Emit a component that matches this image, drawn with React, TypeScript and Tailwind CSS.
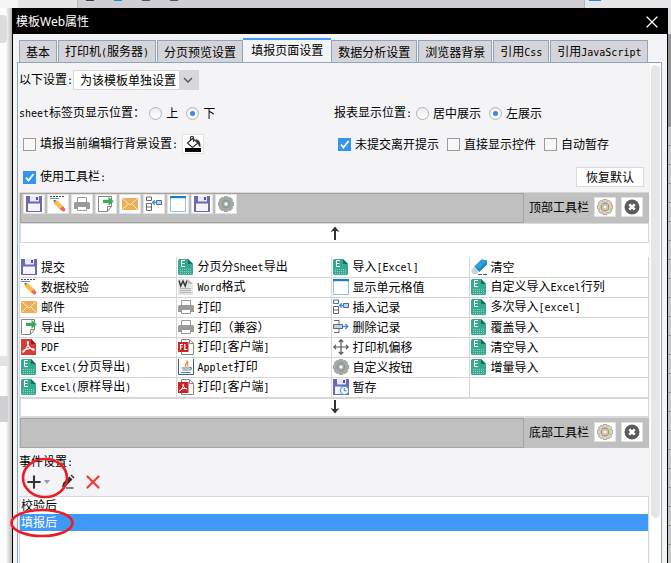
import { useState } from "react";
import type { ReactNode } from "react";
import { Plus, X } from "lucide-react";

const TABS = [
  "基本",
  "打印机(服务器)",
  "分页预览设置",
  "填报页面设置",
  "数据分析设置",
  "浏览器背景",
  "引用Css",
  "引用JavaScript",
];

const TOOLBAR = ["save", "pencil", "print", "export", "mail", "insert", "window", "save", "gear"];

const TOOLBAR_LABELS = ["提交", "数据校验", "打印", "导出", "邮件", "插入记录", "显示单元格值", "暂存", "自定义按钮"];

const ROWS = [
  [["save", "提交"], ["excel", "分页分Sheet导出"], ["excel", "导入[Excel]"], ["eraser", "清空"]],
  [["pencil", "数据校验"], ["word", "Word格式"], ["window", "显示单元格值"], ["excel", "自定义导入Excel行列"]],
  [["mail", "邮件"], ["print", "打印"], ["insert", "插入记录"], ["excel", "多次导入[excel]"]],
  [["export", "导出"], ["print", "打印（兼容）"], ["remove", "删除记录"], ["excel", "覆盖导入"]],
  [["pdf", "PDF"], ["flash", "打印[客户端]"], ["move", "打印机偏移"], ["excel", "清空导入"]],
  [["excel", "Excel(分页导出)"], ["java", "Applet打印"], ["gear", "自定义按钮"], ["excel", "增量导入"]],
  [["excel", "Excel(原样导出)"], ["pdfpage", "打印[客户端]"], ["saveclock", "暂存"], null],
];

// Latin runs are half the width of a Chinese character, as in SimSun
function Label({ text }: { text: string }) {
  return (
    <span>
      {text.split(/([\x21-\x7e]+)/).map((part, i) =>
        i % 2 ? (
          <span key={i} className="font-['DejaVu_Sans_Mono',monospace] text-[10px]">
            {part}
          </span>
        ) : (
          part
        )
      )}
    </span>
  );
}

function Gear({ color, edge, hole }: { color: string; edge: string; hole: string }) {
  return (
    <>
      <g fill={color} stroke={edge} strokeWidth="0.8">
        {[0, 45, 90, 135].map((a) => (
          <rect key={a} x="5.8" y="0.4" width="4.4" height="15.2" rx="1" transform={`rotate(${a} 8 8)`} />
        ))}
      </g>
      <circle cx="8" cy="8" r="6" fill={color} />
      <circle cx="8" cy="8" r="3.8" fill="none" stroke={edge} strokeWidth="1.2" />
      <circle cx="8" cy="8" r="2" fill={hole} stroke={edge} strokeWidth="0.6" />
    </>
  );
}

function Page() {
  return (
    <path d="M3.5 .5h8l4 4v11h-12z M11.5 .5v4h4" fill="#fff" stroke="#858585" />
  );
}

const ART: Record<string, ReactNode> = {
  save: (
    <>
      <path d="M0 0h16v16H0z" fill="#6a67b3" />
      <path d="M4 0h9v5.5H4z" fill="#e9e9f5" />
      <path d="M10 1h2v3h-2z" fill="#5350a0" />
      <path d="M2 7.5h12V15H2z" fill="#f4f4fa" />
    </>
  ),
  saveclock: (
    <>
      <path d="M0 0h16v16H0z" fill="#6a67b3" />
      <path d="M4 0h9v5.5H4z" fill="#e9e9f5" />
      <path d="M10 1h2v3h-2z" fill="#5350a0" />
      <path d="M2 7.5h12V15H2z" fill="#f4f4fa" />
      <circle cx="11.5" cy="11.5" r="4.1" fill="#fff" stroke="#459be8" strokeWidth="1.2" />
      <path d="M11.2 9v2.8h2.3" fill="none" stroke="#3478b9" />
    </>
  ),
  pencil: (
    <>
      <path d="M0 .5h15" stroke="#444" strokeDasharray="2 1" />
      <path d="M0 2.5h9" stroke="#4b9bea" />
      <path d="M3.5 4l3.8.4 6.700 6.600-3.200 3.200L4.200 8z" fill="#f7be4d" />
      <path d="M3.5 4l2.800.3L4 6.800z" fill="#8d6a45" />
      <path d="M12.800 10.200l2.300 2.500c.8 2-.8 3.200-2.600 2.500l-2.400-2.300z" fill="#eb6658" />
    </>
  ),
  print: (
    <>
      <path d="M3.5 1.5h9v5h-9z" fill="#fff" stroke="#999" />
      <path d="M1.5 6h13q1.5 0 1.5 1.5V13H0V7.5Q0 6 1.5 6z" fill="#9b9b9b" />
      <path d="M3.5 10.5h9v4h-9z" fill="#fff" stroke="#999" />
    </>
  ),
  export: (
    <>
      <path d="M.5 .5h13v10l-4 5H.5z" fill="#fff" stroke="#858585" />
      <path d="M9.5 15v-4.5h4" fill="none" stroke="#858585" />
      <path d="M5 3.8h5.5V1l5.3 4.3-5.3 4.4V6.9H5z" fill="#3cad57" />
    </>
  ),
  mail: (
    <>
      <path d="M0 2h16v12H0z" fill="#edae55" />
      <path d="M.5 2.5L8 9l7.5-6.5M.5 13.5L6 8M15.5 13.5L10 8" fill="none" stroke="#fff3df" strokeWidth=".9" />
    </>
  ),
  insert: (
    <>
      <path d="M.5 1h5v3.5h-5zM.5 7.5h5v7h-5zM.5 11h5" fill="#fff" stroke="#666" />
      <path d="M10.5 4.5h5v4h-5z" fill="#b2d6f5" stroke="#666" />
      <path d="M6.5 6.5H11M8.8 4.3L6.5 6.5l2.3 2.2" fill="none" stroke="#398fe8" strokeWidth="1.3" />
    </>
  ),
  remove: (
    <>
      <path d="M1 1.5h5v4M1 13.5h5v-4" fill="none" stroke="#666" />
      <path d="M.5 5.5h9v4h-9z" fill="#b2d6f5" stroke="#666" />
      <path d="M9.5 7.5h5M12.3 5l2.6 2.5-2.6 2.5" fill="none" stroke="#398fe8" strokeWidth="1.3" />
    </>
  ),
  window: (
    <>
      <path d="M.5 .5h15v15H.5z" fill="#fff" stroke="#94bfe2" />
      <path d="M0 0h16v2.2H0z" fill="#1781c8" />
    </>
  ),
  gear: <Gear color="#a5adaa" edge="#8b9490" hole="#fff" />,
  excel: (
    <>
      <path d="M1.5 0H10l5 5v9.5q0 1.5-1.5 1.5h-12Q0 16 0 14.500v-13Q0 0 1.500 0z" fill="#36aa91" />
      <path d="M10 0l5 5h-5z" fill="#17705e" />
      <path d="M7 1.500H3.500v6H7M3.500 4.500h3" fill="none" stroke="#fff" />
      <path d="M2 10.500h11M2 12.500h11M2 14.500h11" stroke="#a5dbcf" strokeWidth=".8" strokeDasharray="1 1" />
    </>
  ),
  word: (
    <>
      <path d="M0 0h10l5 5v11H0z" fill="#e4e4e4" />
      <path d="M10 0l5 5h-5z" fill="#bdbdbd" />
      <path d="M1 1.500l1.700 5.500L5 2l2.200 5L9 1.500" fill="none" stroke="#333" strokeWidth="1.400" />
      <path d="M2 9.500h11M2 11.500h11M2 13.500h11" stroke="#b5b5b5" />
    </>
  ),
  pdf: (
    <>
      <path d="M0 0h10l5 5v11H0z" fill="#d93b37" />
      <path d="M10 0l5 5h-5z" fill="#921f1d" />
      <path d="M6.500 2.500c2 0 .5 6-4 10.500-1.500.5-1-1 1-2 3-1.500 7-2 9.500-.8 1 .9-.5 1.300-2 .3C8 8.500 5.500 4.500 6.500 2.500z" fill="none" stroke="#fff" strokeWidth="1.100" />
    </>
  ),
  flash: (
    <>
      <Page />
      <path d="M0 3h10.500v10H0z" fill="#cd2527" />
      <path d="M5 5.500H2.500v5M2.500 8h2M6.800 5v5.500H9" fill="none" stroke="#fff" strokeWidth="1.200" />
    </>
  ),
  pdfpage: (
    <>
      <Page />
      <path d="M0 3h10.500v11H0z" fill="#cd2527" />
      <path d="M5 5c1.500 0 0 4.500-3.500 7 1-2 5-3.200 7.500-2.200C6.800 10 4.500 7 5 5z" fill="none" stroke="#fff" />
    </>
  ),
  java: (
    <>
      <path d="M.5 0v15.500h15V0" fill="none" stroke="#365f80" />
      <path d="M8.500 1.500C12 3 5 4.500 8 8M10.500 3.500c-2.500 1.500-1 2.500-.5 4" fill="none" stroke="#ef8b38" strokeWidth="1.100" />
      <path d="M3.500 9h8M11.500 8.500c3-.5 2 2.500-.5 2.500M4.500 11h6M3 13.500h9.500" fill="none" stroke="#517a9b" strokeWidth="1.200" />
    </>
  ),
  move: (
    <path
      d="M8 1v14M1 8h14M5.800 3L8 .8 10.200 3M5.800 13L8 15.200l2.200-2.200M3 5.800L.8 8 3 10.200M13 5.800L15.200 8 13 10.200"
      fill="none"
      stroke="#555"
      strokeWidth="1.200"
    />
  ),
  eraser: (
    <>
      <path d="M0 11.500L3.500 7.500l5 3.500L6 15H2z" fill="#c5d5e0" />
      <path d="M3.500 7.500L10.500 .5 16 1.500v4L8.500 13z" fill="#2187c0" />
      <path d="M10.500 .5L16 1.500 8.500 10 3.500 7.500z" fill="#2f9fd6" />
      <path d="M7 15.500h9" stroke="#555" strokeDasharray="4 1" />
    </>
  ),
  goldgear: <Gear color="#ddd4c0" edge="#9b927e" hole="#fff" />,
  close: (
    <>
      <circle cx="8" cy="8" r="7.500" fill="#5b5b5b" />
      <path d="M5.300 5.300l5.400 5.400M10.700 5.300l-5.400 5.400" stroke="#fff" strokeWidth="2.600" />
    </>
  ),
  bucket: (
    <>
      <path d="M0 12h16v4H0z" fill="#000" />
      <path d="M7.500 2.500L13 7l-5.500 4.500L2.500 7z" fill="#fff" stroke="#333" strokeWidth="1.200" />
      <path d="M5.500 5V1.500Q5.500 .5 7 .5t1.500 1.200V6" fill="none" stroke="#333" strokeWidth="1.200" />
      <path d="M10 3c3.500.3 6 3 5.500 8-1.500-.5-2.500-2-2.500-4z" fill="#333" />
    </>
  ),
  edit: (
    <>
      <path d="M2 13l1-4 6.500-6.500 3 3L6 12z" fill="#333" />
      <path d="M10.500 1.500l1-1 3 3-1 1z" fill="#333" />
      <path d="M6 14h7.500" stroke="#333" strokeWidth="1.200" />
    </>
  ),
  up: (
    <>
      <path d="M8 15V4" stroke="#333" strokeWidth="2" />
      <path d="M8 1.500L12.500 7 8 5.500 3.500 7z" fill="#333" />
    </>
  ),
  down: (
    <>
      <path d="M8 1v11" stroke="#333" strokeWidth="2" />
      <path d="M8 14.500L12.500 9 8 10.500 3.500 9z" fill="#333" />
    </>
  ),
};

function Icon({ name }: { name: string }) {
  return (
    <svg viewBox="0 0 16 16" className="h-4 w-4 shrink-0" aria-hidden="true">
      {ART[name]}
    </svg>
  );
}

function IconButton({ name, label }: { name: string; label: string }) {
  return (
    <button
      aria-label={label}
      className="flex h-5 w-[22px] shrink-0 items-center justify-center border border-[#e2e2e2] bg-white"
    >
      <Icon name={name} />
    </button>
  );
}

function Radio({ name, label, checked = false }: { name: string; label: string; checked?: boolean }) {
  return (
    <label className="flex items-center gap-1">
      <span className="grid place-items-center">
        <input
          type="radio"
          name={name}
          defaultChecked={checked}
          className="peer col-start-1 row-start-1 h-[13px] w-[13px] appearance-none rounded-full border border-[#b3b3b3] bg-linear-to-b from-[#ececec] to-white"
        />
        <span className="pointer-events-none col-start-1 row-start-1 hidden h-[5px] w-[5px] rounded-full bg-[#3989ee] peer-checked:block" />
      </span>
      {label}
    </label>
  );
}

function Checkbox({ label, checked = false }: { label: string; checked?: boolean }) {
  return (
    <label className="flex items-center gap-1">
      <span className="grid place-items-center">
        <input
          type="checkbox"
          defaultChecked={checked}
          className="peer col-start-1 row-start-1 h-[13px] w-[13px] appearance-none border border-[#9b9b9b] bg-[#f7f7f7] checked:border-[#3693ee] checked:bg-[#3693ee]"
        />
        <svg
          viewBox="0 0 13 13"
          className="pointer-events-none col-start-1 row-start-1 hidden h-[13px] w-[13px] peer-checked:block"
        >
          <path d="M3 6.500l2.500 3L10.500 3" fill="none" stroke="#fff" strokeWidth="1.800" />
        </svg>
      </span>
      <Label text={label} />
    </label>
  );
}

function ToolbarBox({ title, children }: { title: string; children?: ReactNode }) {
  return (
    <div className="flex h-[31px] border-t border-[#d8d8da] bg-[#c0c0c0]">
      <div className="flex flex-1 gap-0.5 border border-[#a4a498] pl-0.5">{children}</div>
      <div className="flex w-[125px] shrink-0 items-center gap-[5px] pb-0.5 pl-[5px]">
        <span className="w-[60px]">{title}</span>
        <IconButton name="goldgear" label={`设置${title}`} />
        <IconButton name="close" label={`清除${title}`} />
      </div>
    </div>
  );
}

function ArrowBar({ name, label }: { name: string; label: string }) {
  return (
    <button
      aria-label={label}
      className="flex h-full w-full items-center justify-center border border-[#dadadc] bg-white"
    >
      <Icon name={name} />
    </button>
  );
}

export default function App() {
  const [tab, setTab] = useState(3);
  const [event, setEvent] = useState(1);

  return (
    <div className="flex h-screen flex-col overflow-hidden bg-[#ededef] font-['Noto_Sans_CJK_SC',sans-serif] text-[12px] leading-4 text-black">
      {/* Host window behind the dialog */}
      <div className="flex h-2 shrink-0 bg-[#cfcfd3]">
        <div className="w-[18px] bg-[#f5f5f5]" />
        <div className="w-[60px] border-r border-[#bbb] bg-[#e5e5e7]" />
        <div className="flex flex-1 gap-5 overflow-hidden pl-2">
          <span className="h-px w-2 bg-[#444]" />
          <span className="h-px w-2 bg-[#268bd0]" />
          <span className="h-px w-2 bg-[#555]" />
          <span className="h-px w-2 bg-[#555]" />
        </div>
        <div className="w-[87px] border-l border-[#b5b5ba] bg-[#e6e6e9] pl-1">
          <span className="block h-px w-3 bg-[#268bd0]" />
        </div>
      </div>

      <div className="flex min-h-0 flex-1">
        <div className="flex w-3 shrink-0 flex-col bg-linear-to-r from-[#fcfcfc] from-50% to-[#b9b9b9]">
          <div className="mt-[7px] h-7 w-[7px] rounded-r-sm bg-[#dcdcdc]" />
          <div className="mt-[313px] h-2.5 w-2 bg-[#e3e3e4]" />
          <div className="mt-[30px] h-[26px] w-2 bg-[#cfcfd4]" />
        </div>

        <div className="flex min-w-0 flex-1 flex-col border border-b-0 border-black bg-[#f4f4f6]">
          <header className="flex h-[25px] shrink-0 items-center justify-between bg-black pr-[5px] pl-[3px] text-white">
            <h1 className="font-['Noto_Sans','Noto_Sans_CJK_SC',sans-serif]">模板Web属性</h1>
            <button aria-label="关闭">
              <X className="h-5 w-5" strokeWidth={1.5} />
            </button>
          </header>

          <nav role="tablist" className="mt-1 flex shrink-0 items-end gap-px pl-1.5 whitespace-nowrap">
            {TABS.map((name, i) => (
              <button
                key={name}
                role="tab"
                aria-selected={i === tab}
                onClick={() => setTab(i)}
                className={
                  i === tab
                    ? "-mx-px h-6 border-t-2 border-[#4099f8] bg-[#f4f4f6] px-2 pb-0.5"
                    : "h-[22px] rounded-t-[1px] border border-b-0 border-[#8fa4bf] bg-[#d4d4d9] px-1.5"
                }
              >
                <Label text={name} />
              </button>
            ))}
          </nav>

          <main className="mr-[5px] ml-1 flex min-h-0 flex-1 border border-b-0 border-[#8fa4bf]">
            <div className="flex min-w-0 flex-1 flex-col px-px">
              <div className="mt-[7px] flex h-5 items-center">
                <label htmlFor="scope"><Label text="以下设置:" /></label>
                <div className="grid h-5 w-[126px] grid-cols-[1fr_20px] items-center border border-[#d8d8dc] bg-[#d8d8dc]">
                  <select
                    id="scope"
                    className="col-span-2 col-start-1 row-start-1 h-[18px] appearance-none bg-linear-to-r from-white from-[105px] to-[#d8d8dc] to-[105px] pl-1.5"
                  >
                    <option>为该模板单独设置</option>
                    <option>采用服务器设置</option>
                  </select>
                  <svg viewBox="0 0 10 10" className="pointer-events-none col-start-2 row-start-1 h-2.5 w-2.5 justify-self-center">
                    <path d="M1 3l4 4 4-4" fill="none" stroke="#555" strokeWidth="1.400" />
                  </svg>
                </div>
              </div>

              <div className="mt-[13px] grid h-5 grid-cols-2 items-center whitespace-nowrap">
                <div className="flex items-center gap-1">
                  <Label text="sheet标签页显示位置：" />
                  <div className="flex gap-2">
                    <Radio name="sheet" label="上" />
                    <Radio name="sheet" label="下" checked />
                  </div>
                </div>
                <div className="flex items-center gap-1">
                  <Label text="报表显示位置:" />
                  <div className="flex gap-2">
                    <Radio name="align" label="居中展示" />
                    <Radio name="align" label="左展示" checked />
                  </div>
                </div>
              </div>

              <div className="mt-[11px] grid h-5 grid-cols-2 items-center whitespace-nowrap">
                <div className="flex items-center gap-1 pl-1">
                  <Checkbox label="填报当前编辑行背景设置:" />
                  <IconButton name="bucket" label="背景颜色" />
                </div>
                <div className="flex items-center gap-2 pl-1">
                  <Checkbox label="未提交离开提示" checked />
                  <Checkbox label="直接显示控件" />
                  <Checkbox label="自动暂存" />
                </div>
              </div>

              <div className="mt-[13px] mb-[5px] flex h-5 items-center justify-between pr-[5px] pl-1">
                <Checkbox label="使用工具栏:" checked />
                <button className="h-5 w-[68px] border border-[#dadadc] bg-white leading-4">恢复默认</button>
              </div>

              <div className="border-l border-[#d8d8da]">
                <ToolbarBox title="顶部工具栏">
                  {TOOLBAR.map((name, i) => (
                    <IconButton key={i} name={name} label={TOOLBAR_LABELS[i]} />
                  ))}
                </ToolbarBox>
                <div className="h-5">
                  <ArrowBar name="up" label="添加到顶部工具栏" />
                </div>
                <div className="bg-white pt-3.5">
                  <table className="w-full table-fixed border-collapse">
                    <colgroup>
                      <col className="w-[156px]" />
                      <col className="w-[155px]" />
                      <col className="w-[138px]" />
                      <col />
                    </colgroup>
                    <tbody>
                      {ROWS.map((row, r) => (
                        <tr key={r} className="h-5">
                          {row.map((cell, c) => (
                            <td key={c} className="border-r border-b border-[#d6d6d6] p-0 pl-px">
                              {cell && (
                                <span className="flex h-[19px] items-center gap-1 whitespace-nowrap">
                                  <Icon name={cell[0]} />
                                  <Label text={cell[1]} />
                                </span>
                              )}
                            </td>
                          ))}
                        </tr>
                      ))}
                    </tbody>
                  </table>
                </div>
                <div className="h-[19px]">
                  <ArrowBar name="down" label="添加到底部工具栏" />
                </div>
                <ToolbarBox title="底部工具栏" />
              </div>

              <h2 className="mt-[5px] h-4"><Label text="事件设置:" /></h2>
              <div className="relative flex h-[27px] items-center pl-[5px]">
                <button aria-label="添加事件" className="flex items-center">
                  <Plus className="h-5 w-5 text-[#333]" strokeWidth={2.5} />
                  <svg viewBox="0 0 6 4" className="h-1 w-1.5">
                    <path d="M0 0h6L3 4z" fill="#999" />
                  </svg>
                </button>
                <button aria-label="编辑事件" className="ml-2.5">
                  <Icon name="edit" />
                </button>
                <button aria-label="删除事件" className="ml-1.5">
                  <X className="h-[22px] w-[22px] text-[#e8403d]" strokeWidth={2.5} />
                </button>
                <svg viewBox="0 0 48 42" className="pointer-events-none absolute -top-3 left-0.5 z-10 h-[42px] w-12">
                  <ellipse cx="24" cy="21" rx="22" ry="19" fill="none" stroke="#ec1c24" strokeWidth="2.600" />
                </svg>
              </div>

              <ul className="flex-1 border border-b-0 border-[#d8d8da] bg-white">
                {["校验后", "填报后"].map((name, i) => (
                  <li key={name} className="relative">
                    <button
                      onClick={() => setEvent(i)}
                      className={
                        i === event
                          ? "block h-[17px] w-full bg-[#4099f8] pl-px text-left text-white"
                          : "block h-[17px] w-full pl-px text-left"
                      }
                    >
                      {name}
                    </button>
                    {i === 1 && (
                      <svg viewBox="0 0 64 30" className="pointer-events-none absolute -top-1.5 -left-2.5 z-10 h-[30px] w-16">
                        <ellipse cx="32" cy="15" rx="30.500" ry="13" fill="none" stroke="#ec1c24" strokeWidth="2.600" />
                      </svg>
                    )}
                  </li>
                ))}
              </ul>
            </div>

            {/* Scrollbar */}
            <div className="w-[11px] shrink-0 bg-white px-px pt-0.5">
              <div className="h-[453px] rounded-full bg-[#e6e6e6]" />
            </div>
          </main>
        </div>

        <div className="flex w-[3px] shrink-0 flex-col bg-[#c8c8c8]">
          <div className="h-[27px] bg-[#dedee2]" />
          <div className="h-[97px] bg-[#929292]" />
          {Array.from({ length: 23 }, (_, i) => (
            <div key={i} className="h-[19px] shrink-0 border-t border-[#999]" />
          ))}
        </div>
      </div>
    </div>
  );
}
